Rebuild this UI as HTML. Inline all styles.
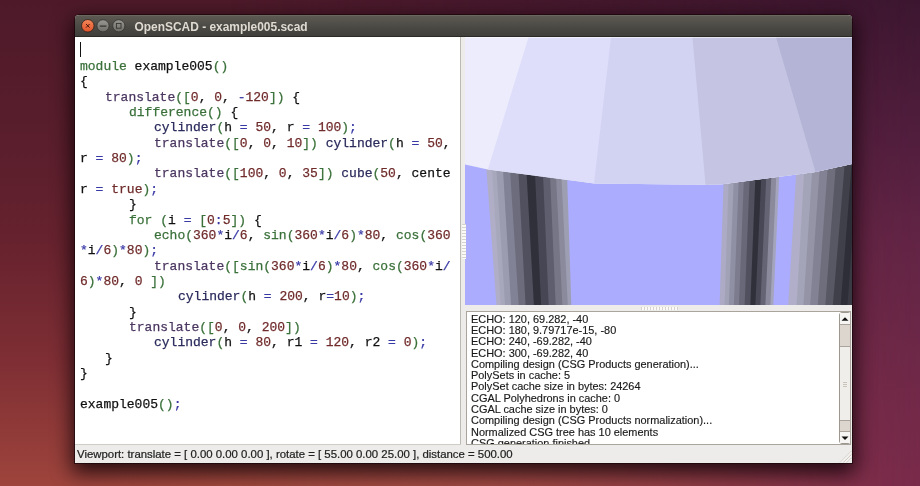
<!DOCTYPE html>
<html><head><meta charset="utf-8">
<style>
*{margin:0;padding:0;box-sizing:border-box}
html,body{width:920px;height:486px;overflow:hidden}
body{position:relative;font-family:"Liberation Sans",sans-serif;
background:linear-gradient(to bottom,#4e1a2a 0%,#5a1e2c 29%,#66222e 49%,#7e2e34 74%,#9e443c 100%);}
#bgr{position:absolute;left:0;top:0;width:920px;height:486px;
background:linear-gradient(to bottom,#3c1630 0%,#521e3e 29%,#622445 49%,#6e2848 74%,#792a4a 100%);
-webkit-mask-image:linear-gradient(to right,rgba(0,0,0,0) 25%,rgba(0,0,0,1) 100%);}
#glow{position:absolute;left:0;top:0;width:920px;height:486px;
background:radial-gradient(ellipse 420px 160px at 480px 520px,rgba(190,100,70,0.45),rgba(190,100,70,0) 100%);}
#shadow{position:absolute;left:75px;top:15px;width:777px;height:448px;border-radius:5px 5px 0 0;
box-shadow:0 0 0 1px rgba(25,5,10,0.7),0 7px 20px 3px rgba(10,0,5,0.8)}
#win{position:absolute;left:75px;top:15px;width:777px;height:448px;border-radius:4px 4px 0 0;background:#edeceb;overflow:hidden}
#title{position:absolute;left:0;top:0;width:777px;height:22px;
background:linear-gradient(to bottom,#5b5951 0%,#4c4a45 50%,#403f3b 95%,#2b2a27 95%,#2b2a27 100%);border-top:1px solid #6a675e}
#ttxt{position:absolute;left:59.5px;top:3.6px;font-weight:bold;font-size:11.95px;color:#dfdbd2;white-space:nowrap}
.btn{position:absolute;width:13px;height:13px;border-radius:50%}
#editor{position:absolute;left:0;top:22px;width:385px;height:407px;background:#fff}
#edr{position:absolute;left:385px;top:22px;width:1px;height:408px;background:#bdb9b3}
#edb{position:absolute;left:0;top:429px;width:386px;height:1px;background:#cfccc6}
.ln{position:absolute;font-family:"Liberation Mono",monospace;font-size:13.5px;white-space:pre;color:#111;line-height:15px;-webkit-text-stroke:0.25px currentColor;transform:scaleX(0.963);transform-origin:0 0}
#win{will-change:transform}
.g{color:#3a703a}.p{color:#4b3660}.r{color:#702b2b}.b{color:#2b2b5c}.o{color:#3a3aa6}
#view{position:absolute;left:390px;top:22px;width:387px;height:268px;overflow:hidden}
#cons{position:absolute;left:391px;top:296px;width:385px;height:134px;background:#fff;border:1px solid #a9a49c;overflow:hidden}
.cl{position:absolute;left:4px;font-size:10.4px;white-space:pre;color:#1a1a1a;-webkit-text-stroke:0.15px #1a1a1a;line-height:11px;transform:scaleX(1.052);transform-origin:0 0}
#sb{position:absolute;left:372px;top:0px;width:12px;height:132px;background:#dcd6ce;border:1px solid #9c978f;border-radius:3px}
#sbup{position:absolute;left:0;top:0;width:10px;height:12px;background:#f6f5f3;border-bottom:1px solid #aaa49c}
#sbdown{position:absolute;left:0;bottom:0;width:10px;height:12px;background:#f6f5f3;border-top:1px solid #aaa49c}
#sbhandle{position:absolute;left:0;top:33px;width:10px;height:75px;background:#f0eeeb;border-top:1px solid #aaa49c;border-bottom:1px solid #aaa49c}
#status{position:absolute;left:2px;top:432.8px;font-size:10.6px;color:#222;-webkit-text-stroke:0.2px #222;white-space:pre;transform:scaleX(1.075);transform-origin:0 0}
#vgrip{position:absolute;left:387px;top:209px;width:3.5px;height:35px;background:repeating-linear-gradient(to bottom,#d6d3cc 0,#d6d3cc 1px,#fbfaf8 1px,#fbfaf8 3px)}
#grip{position:absolute;left:566px;top:291.5px;width:37px;height:3.5px;background:repeating-linear-gradient(to right,#d6d3cc 0,#d6d3cc 1px,#fbfaf8 1px,#fbfaf8 3px)}
</style></head><body>
<div id="bgr"></div><div id="glow"></div>
<div id="shadow"></div>
<div id="win">
 <div id="title">
  <svg width="60" height="22" style="position:absolute;left:0;top:-1px">
   <defs>
    <linearGradient id="gc" x1="0" y1="0" x2="0" y2="1"><stop offset="0" stop-color="#f4885a"/><stop offset="1" stop-color="#e2532a"/></linearGradient>
    <linearGradient id="gg" x1="0" y1="0" x2="0" y2="1"><stop offset="0" stop-color="#9a9892"/><stop offset="1" stop-color="#6e6c66"/></linearGradient>
   </defs>
   <circle cx="12.8" cy="10.8" r="6.3" fill="url(#gc)" stroke="#35251d" stroke-width="0.9"/>
   <path d="M11 9 L14.6 12.6 M14.6 9 L11 12.6" stroke="#4a1608" stroke-width="1.0"/>
   <circle cx="28" cy="10.8" r="6.1" fill="url(#gg)" stroke="#3a3935" stroke-width="0.9"/>
   <path d="M24.8 11.2 H31.4" stroke="#35342f" stroke-width="1.2"/>
   <circle cx="43.8" cy="10.8" r="6.1" fill="url(#gg)" stroke="#3a3935" stroke-width="0.9"/>
   <rect x="41.4" y="8.4" width="4.6" height="4.8" fill="none" stroke="#35342f" stroke-width="0.9"/>
  </svg>
  <div id="ttxt">OpenSCAD - example005.scad</div>
 </div>
 <div id="editor">
<div style="position:absolute;left:5px;top:5px;width:1px;height:15px;background:#111"></div>
<div class="ln" style="left:5.0px;top:21.80px"><span class="g">module</span> example005<span class="g">(</span><span class="g">)</span></div>
<div class="ln" style="left:5.0px;top:37.17px">{</div>
<div class="ln" style="left:29.5px;top:52.54px"><span class="p">translate</span><span class="g">(</span><span class="g">[</span><span class="r">0</span>, <span class="r">0</span>, <span class="o">-</span><span class="r">120</span><span class="g">]</span><span class="g">)</span> {</div>
<div class="ln" style="left:54.0px;top:67.91px"><span class="g">difference</span><span class="g">(</span><span class="g">)</span> {</div>
<div class="ln" style="left:78.5px;top:83.28px"><span class="b">cylinder</span><span class="g">(</span>h <span class="o">=</span> <span class="r">50</span>, r <span class="o">=</span> <span class="r">100</span><span class="g">)</span><span class="o">;</span></div>
<div class="ln" style="left:78.5px;top:98.65px"><span class="p">translate</span><span class="g">(</span><span class="g">[</span><span class="r">0</span>, <span class="r">0</span>, <span class="r">10</span><span class="g">]</span><span class="g">)</span> <span class="b">cylinder</span><span class="g">(</span>h <span class="o">=</span> <span class="r">50</span>,</div>
<div class="ln" style="left:5.0px;top:114.02px">r <span class="o">=</span> <span class="r">80</span><span class="g">)</span><span class="o">;</span></div>
<div class="ln" style="left:78.5px;top:129.39px"><span class="p">translate</span><span class="g">(</span><span class="g">[</span><span class="r">100</span>, <span class="r">0</span>, <span class="r">35</span><span class="g">]</span><span class="g">)</span> <span class="b">cube</span><span class="g">(</span><span class="r">50</span>, cente</div>
<div class="ln" style="left:5.0px;top:144.76px">r <span class="o">=</span> <span class="r">true</span><span class="g">)</span><span class="o">;</span></div>
<div class="ln" style="left:54.0px;top:160.13px">}</div>
<div class="ln" style="left:54.0px;top:175.50px"><span class="g">for</span> <span class="g">(</span>i <span class="o">=</span> <span class="g">[</span><span class="r">0</span><span class="o">:</span><span class="r">5</span><span class="g">]</span><span class="g">)</span> {</div>
<div class="ln" style="left:78.5px;top:190.87px"><span class="g">echo</span><span class="g">(</span><span class="r">360</span><span class="o">*</span>i<span class="o">/</span><span class="r">6</span>, <span class="g">sin</span><span class="g">(</span><span class="r">360</span><span class="o">*</span>i<span class="o">/</span><span class="r">6</span><span class="g">)</span><span class="o">*</span><span class="r">80</span>, <span class="g">cos</span><span class="g">(</span><span class="r">360</span></div>
<div class="ln" style="left:5.0px;top:206.24px"><span class="o">*</span>i<span class="o">/</span><span class="r">6</span><span class="g">)</span><span class="o">*</span><span class="r">80</span><span class="g">)</span><span class="o">;</span></div>
<div class="ln" style="left:78.5px;top:221.61px"><span class="p">translate</span><span class="g">(</span><span class="g">[</span><span class="g">sin</span><span class="g">(</span><span class="r">360</span><span class="o">*</span>i<span class="o">/</span><span class="r">6</span><span class="g">)</span><span class="o">*</span><span class="r">80</span>, <span class="g">cos</span><span class="g">(</span><span class="r">360</span><span class="o">*</span>i<span class="o">/</span></div>
<div class="ln" style="left:5.0px;top:236.98px"><span class="r">6</span><span class="g">)</span><span class="o">*</span><span class="r">80</span>, <span class="r">0</span> <span class="g">]</span><span class="g">)</span></div>
<div class="ln" style="left:103.0px;top:252.35px"><span class="b">cylinder</span><span class="g">(</span>h <span class="o">=</span> <span class="r">200</span>, r<span class="o">=</span><span class="r">10</span><span class="g">)</span><span class="o">;</span></div>
<div class="ln" style="left:54.0px;top:267.72px">}</div>
<div class="ln" style="left:54.0px;top:283.09px"><span class="p">translate</span><span class="g">(</span><span class="g">[</span><span class="r">0</span>, <span class="r">0</span>, <span class="r">200</span><span class="g">]</span><span class="g">)</span></div>
<div class="ln" style="left:78.5px;top:298.46px"><span class="b">cylinder</span><span class="g">(</span>h <span class="o">=</span> <span class="r">80</span>, r1 <span class="o">=</span> <span class="r">120</span>, r2 <span class="o">=</span> <span class="r">0</span><span class="g">)</span><span class="o">;</span></div>
<div class="ln" style="left:29.5px;top:313.83px">}</div>
<div class="ln" style="left:5.0px;top:329.20px">}</div>
<div class="ln" style="left:5.0px;top:344.57px"></div>
<div class="ln" style="left:5.0px;top:359.94px">example005<span class="g">(</span><span class="g">)</span><span class="o">;</span></div>

</div>
 <div id="edr"></div><div id="edb"></div>
 <div id="view">
<svg width="387" height="268" viewBox="465 37 387 268" style="position:absolute;left:0;top:0">
<rect x="465" y="37" width="387" height="268" fill="#abacfe"/>
<polygon points="476.61,37.00 484.21,37.00 501.65,306.00 496.54,306.00" fill="#b0aec6"/>
<polygon points="483.41,37.00 488.75,37.00 505.94,306.00 500.85,306.00" fill="#a8a8bc"/>
<polygon points="487.95,37.00 495.95,37.00 511.89,306.00 505.14,306.00" fill="#9c9cb0"/>
<polygon points="495.15,37.00 502.35,37.00 519.54,306.00 511.09,306.00" fill="#828296"/>
<polygon points="501.55,37.00 511.99,37.00 526.44,306.00 518.74,306.00" fill="#6c6c7c"/>
<polygon points="511.19,37.00 519.81,37.00 534.76,306.00 525.64,306.00" fill="#50505e"/>
<polygon points="519.01,37.00 529.51,37.00 541.96,306.00 533.96,306.00" fill="#30303a"/>
<polygon points="528.71,37.00 537.83,37.00 549.54,306.00 541.16,306.00" fill="#464654"/>
<polygon points="537.03,37.00 544.83,37.00 556.54,306.00 548.74,306.00" fill="#5e5e6e"/>
<polygon points="544.03,37.00 549.99,37.00 563.19,306.00 555.74,306.00" fill="#767686"/>
<polygon points="549.19,37.00 555.39,37.00 568.59,306.00 562.39,306.00" fill="#8a8a9c"/>
<polygon points="554.59,37.00 562.61,37.00 571.32,306.00 567.79,306.00" fill="#9e9eb2"/>
<polygon points="728.28,37.00 734.08,37.00 725.38,306.00 719.58,306.00" fill="#acaac4"/>
<polygon points="733.28,37.00 740.16,37.00 729.61,306.00 724.58,306.00" fill="#a2a2b6"/>
<polygon points="739.36,37.00 745.16,37.00 734.61,306.00 728.81,306.00" fill="#9090a4"/>
<polygon points="744.36,37.00 750.26,37.00 739.71,306.00 733.81,306.00" fill="#7c7c8e"/>
<polygon points="749.46,37.00 755.96,37.00 745.41,306.00 738.91,306.00" fill="#686878"/>
<polygon points="755.16,37.00 761.66,37.00 751.11,306.00 744.61,306.00" fill="#50505e"/>
<polygon points="760.86,37.00 768.53,37.00 756.14,306.00 750.31,306.00" fill="#30303a"/>
<polygon points="767.73,37.00 773.53,37.00 761.14,306.00 755.34,306.00" fill="#484856"/>
<polygon points="772.73,37.00 778.53,37.00 766.14,306.00 760.34,306.00" fill="#646474"/>
<polygon points="777.73,37.00 783.53,37.00 771.14,306.00 765.34,306.00" fill="#8a8a9c"/>
<polygon points="782.73,37.00 785.63,37.00 773.24,306.00 770.34,306.00" fill="#a4a4bc"/>
<polygon points="804.47,37.00 812.47,37.00 797.38,306.00 788.13,306.00" fill="#b0aec8"/>
<polygon points="811.67,37.00 821.78,37.00 804.18,306.00 796.58,306.00" fill="#a4a4b8"/>
<polygon points="820.98,37.00 829.54,37.00 810.94,306.00 803.38,306.00" fill="#9494a6"/>
<polygon points="828.74,37.00 837.87,37.00 818.51,306.00 810.14,306.00" fill="#828294"/>
<polygon points="837.07,37.00 846.19,37.00 826.08,306.00 817.71,306.00" fill="#6e6e7c"/>
<polygon points="845.39,37.00 856.20,37.00 833.57,306.00 825.28,306.00" fill="#585864"/>
<polygon points="855.40,37.00 862.45,37.00 841.34,306.00 832.77,306.00" fill="#40404a"/>
<polygon points="861.65,37.00 867.81,37.00 848.20,306.00 840.54,306.00" fill="#2e2e38"/>
<polygon points="867.01,37.00 874.09,37.00 853.98,306.00 847.40,306.00" fill="#3a3a44"/>
<polygon points="873.29,37.00 884.11,37.00 858.97,306.00 853.18,306.00" fill="#585c64"/>
<polygon points="465.00,37.00 852.00,37.00 852.00,164.00 815.50,172.00 722.00,184.30 705.50,184.80 594.00,183.40 487.80,169.50 465.00,164.40" fill="#ececfc"/>
<polygon points="528.60,37.00 852.00,37.00 852.00,164.00 815.50,172.00 722.00,184.30 705.50,184.80 594.00,183.40 487.80,169.50" fill="#dedefa"/>
<polygon points="611.10,37.00 852.00,37.00 852.00,164.00 815.50,172.00 722.00,184.30 705.50,184.80 594.00,183.40" fill="#d2d2f2"/>
<polygon points="692.40,37.00 852.00,37.00 852.00,164.00 815.50,172.00 722.00,184.30 705.50,184.80" fill="#c5c5e3"/>
<polygon points="775.90,37.00 852.00,37.00 852.00,164.00 815.50,172.00" fill="#b4b4d6"/>
<rect x="465" y="37" width="387" height="1" fill="#ffffff" fill-opacity="0.55"/>
</svg>
</div>
 <div id="grip"></div><div id="vgrip"></div>
 <div id="cons">
<div class="cl" style="top:1.60px">ECHO: 120, 69.282, -40</div>
<div class="cl" style="top:12.91px">ECHO: 180, 9.79717e-15, -80</div>
<div class="cl" style="top:24.22px">ECHO: 240, -69.282, -40</div>
<div class="cl" style="top:35.53px">ECHO: 300, -69.282, 40</div>
<div class="cl" style="top:46.84px">Compiling design (CSG Products generation)...</div>
<div class="cl" style="top:58.15px">PolySets in cache: 5</div>
<div class="cl" style="top:69.46px">PolySet cache size in bytes: 24264</div>
<div class="cl" style="top:80.77px">CGAL Polyhedrons in cache: 0</div>
<div class="cl" style="top:92.08px">CGAL cache size in bytes: 0</div>
<div class="cl" style="top:103.39px">Compiling design (CSG Products normalization)...</div>
<div class="cl" style="top:114.70px">Normalized CSG tree has 10 elements</div>
<div class="cl" style="top:126.01px">CSG generation finished.</div>
<div id="sb">
<div id="sbup"><svg width="10" height="12" style="position:absolute;left:0;top:0"><path d="M1.5 7.8 L5 4.3 L8.5 7.8 Z" fill="#101010"/></svg></div><div id="sbhandle"><svg width="10" height="75" style="position:absolute;left:0;top:0"><path d="M3 35.5 H7 M3 37.5 H7 M3 39.5 H7" stroke="#c8c4bc" stroke-width="1"/></svg></div><div id="sbdown"><svg width="10" height="12" style="position:absolute;left:0;top:0"><path d="M1.5 4.5 L5 8 L8.5 4.5 Z" fill="#101010"/></svg></div>
</div>
</div>
 <svg width="14" height="14" style="position:absolute;left:763px;top:434px"><path d="M2 13.5 L13.5 2 M5.5 13.5 L13.5 5.5 M9 13.5 L13.5 9" stroke="#cfcbc3" stroke-width="1"/><path d="M3 13.5 L13.5 3 M6.5 13.5 L13.5 6.5 M10 13.5 L13.5 10" stroke="#fbfaf8" stroke-width="0.8"/></svg>
 <div id="status">Viewport: translate = [ 0.00 0.00 0.00 ], rotate = [ 55.00 0.00 25.00 ], distance = 500.00</div>
</div>
</body></html>
